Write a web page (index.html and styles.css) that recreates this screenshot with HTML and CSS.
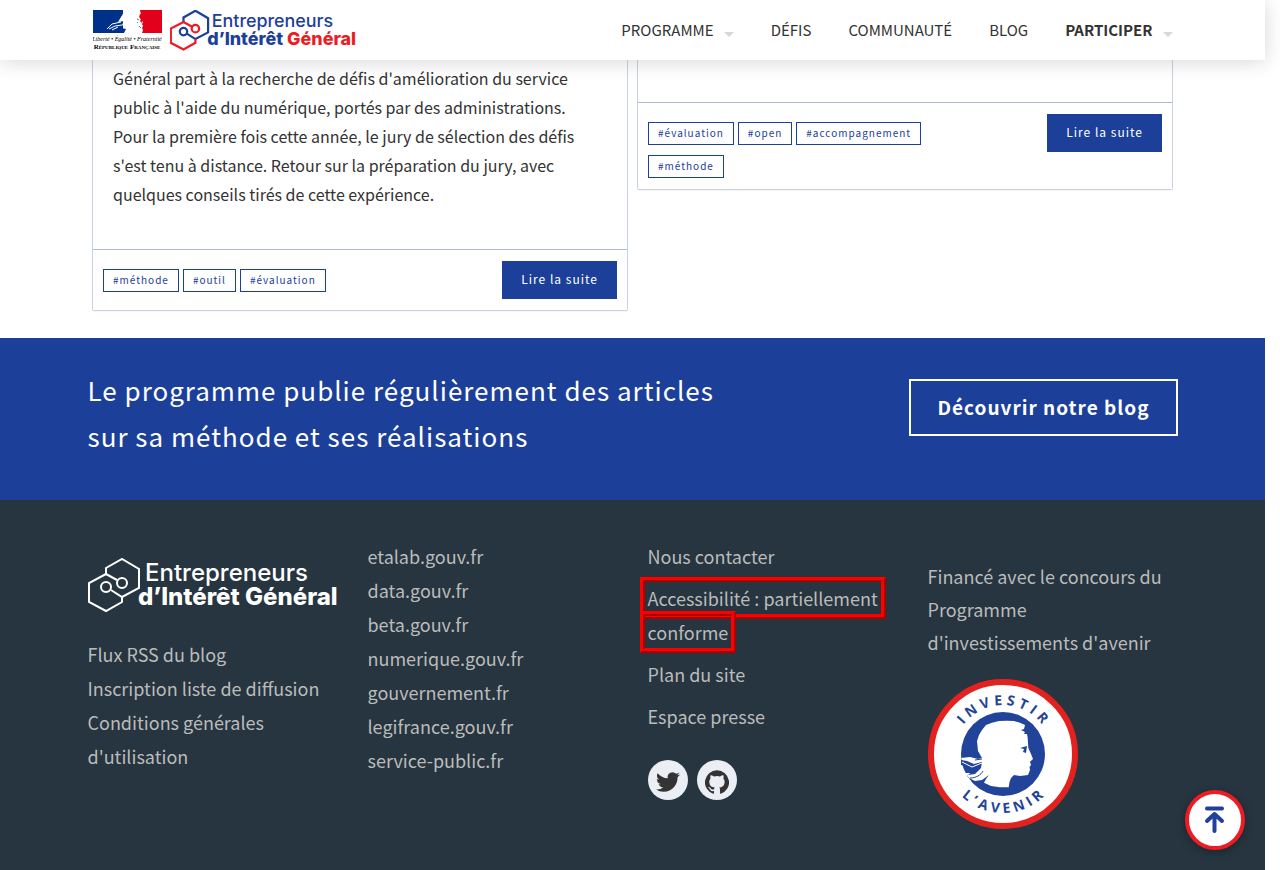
FILE: index.html
```html
<!DOCTYPE html>
<html lang="fr">
<head>
<meta charset="utf-8">
<title>Entrepreneurs d'Intérêt Général</title>
<meta name="viewport" content="width=device-width, initial-scale=1">
<link rel="stylesheet" href="styles.css">
</head>
<body>
<header class="header">
  <div class="container header-inner">
    <a class="brand" href="#" aria-label="Accueil">
      <svg class="marianne" width="70" height="41" viewBox="0 0 70 41">
        <rect width="32" height="23" fill="#003189"/>
        <rect x="30" width="18" height="23" fill="#fff"/>
        <rect x="47" width="22" height="23" fill="#e2001a"/>
        <path fill="#fff" d="M32 0C30 2 30 5 28 7L25 12L31 11L29 15L32 17L27 23H49L50 20L49 18L50 16L49 14L50 12L47 8L48 5L47 0Z"/>
        <path fill="none" stroke="#fff" stroke-width="1" d="M14 19L19 14L28 12M16 19L22 16L29 15M19 20L25 17"/>
        <path fill="#003189" d="M28 18L33 19L31 23H26Z"/>
        <path fill="none" stroke="#777" stroke-width="1" d="M44 9L46 10M44 12L45 13M46 16L48 18"/>
        <path fill="#e2001a" d="M46 7L48 9L47 11L49 13L50 5L47 4Z"/>
        <text class="motto" x="34" y="31" text-anchor="middle">Liberté • Égalité • Fraternité</text>
        <text class="republic" x="34" y="39" text-anchor="middle">République Française</text>
      </svg>
      <svg class="eig" width="188" height="41" viewBox="0 0 252 55">
        <g fill="none" stroke-width="3">
          <path class="hex-b" d="M18 16V10L34 1L51 11V30L34 39L23 32"/>
          <path class="hex-a" d="M29 22L18 16L1 25V44L18 53L34 44V39"/>
          <circle class="hex-a" cx="34" cy="25" r="5"/>
          <circle class="hex-b" cx="18" cy="29" r="5"/>
        </g>
        <text class="eig-top" x="56" y="23">Entrepreneurs</text>
        <text class="eig-bottom" x="50" y="47">d’Intérêt</text>
        <text class="eig-bottom eig-accent" x="157" y="47">Général</text>
      </svg>
    </a>
    <nav class="nav">
      <a class="has-menu" href="#">PROGRAMME</a>
      <a href="#">DÉFIS</a>
      <a href="#">COMMUNAUTÉ</a>
      <a href="#">BLOG</a>
      <a class="has-menu strong" href="#">PARTICIPER</a>
    </nav>
  </div>
</header>
<main>
  <section class="container cards">
    <article class="card">
      <p class="card-text">Général part à la recherche de défis d'amélioration du service public à l'aide du numérique, portés par des administrations. Pour la première fois cette année, le jury de sélection des défis s'est tenu à distance. Retour sur la préparation du jury, avec quelques conseils tirés de cette expérience.</p>
      <div class="card-foot">
        <div class="tags"><a href="#">#méthode</a><a href="#">#outil</a><a href="#">#évaluation</a></div>
        <a class="more" href="#">Lire la suite</a>
      </div>
    </article>
    <article class="card">
      <p class="card-text empty"></p>
      <div class="card-foot">
        <div class="tags"><a href="#">#évaluation</a><a href="#">#open</a><a href="#">#accompagnement</a><a href="#">#méthode</a></div>
        <a class="more" href="#">Lire la suite</a>
      </div>
    </article>
  </section>
  <section class="cta">
    <div class="container cta-inner">
      <p class="cta-text">Le programme publie régulièrement des articles sur sa méthode et ses réalisations</p>
      <a class="cta-button" href="#">Découvrir notre blog</a>
    </div>
  </section>
</main>
<footer class="footer">
  <div class="container footer-cols">
    <div class="col">
      <svg class="eig eig-white" width="252" height="55" viewBox="0 0 252 55" role="img" aria-label="Entrepreneurs d'Intérêt Général">
        <g fill="none" stroke-width="2">
          <path class="hex-b" d="M18 16V10L34 1L51 11V30L34 39L23 32"/>
          <path class="hex-a" d="M29 22L18 16L1 25V44L18 53L34 44V39"/>
          <circle class="hex-a" cx="34" cy="25" r="5"/>
          <circle class="hex-b" cx="18" cy="29" r="5"/>
        </g>
        <text class="eig-top" x="57" y="23">Entrepreneurs</text>
        <text class="eig-bottom" x="50" y="47">d’Intérêt</text>
        <text class="eig-bottom eig-accent" x="157" y="47">Général</text>
      </svg>
      <ul class="links">
        <li><a href="#">Flux RSS du blog</a></li>
        <li><a href="#">Inscription liste de diffusion</a></li>
        <li><a href="#">Conditions générales d'utilisation</a></li>
      </ul>
    </div>
    <div class="col">
      <ul class="links">
        <li><a href="#">etalab.gouv.fr</a></li>
        <li><a href="#">data.gouv.fr</a></li>
        <li><a href="#">beta.gouv.fr</a></li>
        <li><a href="#">numerique.gouv.fr</a></li>
        <li><a href="#">gouvernement.fr</a></li>
        <li><a href="#">legifrance.gouv.fr</a></li>
        <li><a href="#">service-public.fr</a></li>
      </ul>
    </div>
    <div class="col">
      <ul class="links spaced">
        <li><a href="#">Nous contacter</a></li>
        <li><a href="#"><span class="flagged">Accessibilité : partiellement</span> <span class="flagged">conforme</span></a></li>
        <li><a href="#">Plan du site</a></li>
        <li><a href="#">Espace presse</a></li>
      </ul>
      <div class="social">
        <a href="#" aria-label="Twitter"><svg width="24" height="24" viewBox="0 0 24 24"><path d="M23.95 4.57a10 10 0 0 1-2.82.77 4.96 4.96 0 0 0 2.16-2.72c-.95.55-2 .95-3.13 1.18a4.92 4.92 0 0 0-8.38 4.48C7.69 8.1 4.07 6.13 1.64 3.16a4.82 4.82 0 0 0-.67 2.48c0 1.7.87 3.21 2.19 4.1a4.9 4.9 0 0 1-2.23-.62v.06a4.92 4.92 0 0 0 3.95 4.83 5 5 0 0 1-2.21.08 4.94 4.94 0 0 0 4.6 3.42A9.87 9.87 0 0 1 0 19.54a13.99 13.99 0 0 0 7.56 2.21c9.05 0 14-7.5 14-13.98 0-.21 0-.42-.02-.63a9.94 9.94 0 0 0 2.46-2.55z"/></svg></a>
        <a href="#" aria-label="GitHub"><svg width="24" height="24" viewBox="0 0 24 24"><path d="M12 .3a12 12 0 0 0-3.8 23.4c.6.1.8-.3.8-.6v-2c-3.3.7-4-1.6-4-1.6-.6-1.4-1.4-1.8-1.4-1.8-1-.7.1-.7.1-.7 1.2 0 1.9 1.2 1.9 1.2 1 1.8 2.8 1.3 3.5 1 0-.8.4-1.3.7-1.6-2.7-.3-5.5-1.3-5.5-6 0-1.2.5-2.3 1.3-3.1-.2-.4-.6-1.6 0-3.2 0 0 1-.3 3.4 1.2a11.5 11.5 0 0 1 6 0c2.3-1.5 3.3-1.2 3.3-1.2.6 1.6.2 2.8 0 3.2.9.8 1.3 1.9 1.3 3.2 0 4.6-2.8 5.6-5.5 5.9.5.4.9 1 .9 2.2v3.3c0 .3.1.7.8.6A12 12 0 0 0 12 .3"/></svg></a>
      </div>
    </div>
    <div class="col">
      <p class="funding">Financé avec le concours du Programme d'investissements d'avenir</p>
      <svg class="stamp" width="150" height="150" viewBox="0 0 150 150" role="img" aria-label="Investir l'avenir">
        <circle cx="75" cy="75" r="72" fill="#fff" stroke="#e3221f" stroke-width="6"/>
        <circle cx="75" cy="75" r="42" fill="#21449a"/>
        <path fill="#fff" d="M49 62L51 56L54 51L58 46L64 43.700L71 42L79 41.700L86 42L92 43.700L97 46L96 50L93 51L97 53L96 55L99 55L99.700 59L100.300 69L103 75L105 80L102 82.700L103 86L101.500 88L102 91L100 96L92 97L86 96L83 99L81.500 103L80.700 108.300L72 108.300L63 107L56 103.700L58 100L61 96L54 101L47 102L41 99L39 96L35 96L34 94L44 94L50 90L44 88L37 86L33 79L42 78L50 80L54 79L50 72Z"/>
        <path fill="#21449a" d="M92 69L99 67L98 74L95 73L96 70ZM33 81L39 82L46 85L54 83L53 89L47 95L40 96L46 91L38 87L33 86Z"/>
        <path fill="none" stroke="#fff" stroke-width="1" d="M34 83L44 88L54 84"/>
        <path fill="none" stroke="#21449a" stroke-width="1" d="M42 99C48 99 53 96 55 92M47 81L54 80"/>
        <path id="arc-top" d="M26 75A49 49 0 0 1 124 75" fill="none"/>
        <path id="arc-bottom" d="M16 75A59 59 0 0 0 134 75" fill="none"/>
        <text class="stamp-text"><textPath href="#arc-top" startOffset="51%" text-anchor="middle">INVESTIR</textPath></text>
        <text class="stamp-text"><textPath href="#arc-bottom" startOffset="51%" text-anchor="middle">L’AVENIR</textPath></text>
      </svg>
    </div>
  </div>
</footer>
<a class="to-top" href="#" aria-label="Haut de page"><svg width="52" height="52" viewBox="0 0 52 52"><path d="M18 14.500H33M25.500 37V20M18 27L25.500 20L33 27" fill="none" stroke="#1f409b" stroke-width="4" stroke-linecap="round" stroke-linejoin="round"/></svg></a>
</body>
</html>
```
FILE: styles.css
```css
* { box-sizing: border-box; }
body {
  margin: 0;
  padding-right: 15px;
  background: #fff;
  color: #333;
  font-family: "Noto Sans CJK JP", "Noto Sans", sans-serif;
  font-size: 16px;
}
a { color: inherit; text-decoration: none; }
p, ul { margin: 0; padding: 0; }
ul { list-style: none; }
svg { display: block; }
.container { max-width: 1120px; margin: 0 auto; padding: 0 15px; }

.header {
  position: sticky;
  top: 0;
  z-index: 2;
  background: #fff;
  box-shadow: 0 2px 20px rgba(10, 10, 10, 0.16);
}
.header-inner {
  display: flex;
  justify-content: space-between;
  align-items: center;
  height: 60px;
  padding: 0 20px;
}
.brand { display: flex; align-items: center; gap: 7px; }
.motto { font: italic 6px "Liberation Serif", serif; }
.republic { font: bold 7px "Liberation Serif", serif; font-variant: small-caps; }
.hex-a { stroke: #ed1c24; }
.hex-b { stroke: #1c4099; }
.eig-top { font: 500 24px Inter, sans-serif; fill: #1c4099; }
.eig-bottom { font: 800 24px Inter, sans-serif; fill: #1c4099; }
.eig-accent { fill: #ed1c24; }
.eig-white .hex-a, .eig-white .hex-b { stroke: #fff; }
.eig-white .eig-top, .eig-white .eig-bottom, .eig-white .eig-accent { fill: #fff; }

.nav { display: flex; gap: 37px; font-size: 15px; line-height: 22px; }
.nav .strong { font-weight: 700; }
.has-menu { display: flex; align-items: center; gap: 10px; }
.has-menu::after {
  content: "";
  margin-top: 8px;
  border: 5px solid transparent;
  border-top-color: #d8d8d8;
  border-bottom: 0;
}

.cards {
  display: grid;
  grid-template-columns: 1fr 1fr;
  gap: 9px;
  align-items: start;
  max-width: 1121px;
  padding: 0 20px 27px;
}
.card {
  border: 1px solid #c9d3df;
  border-top: 0;
  border-radius: 0 0 2px 2px;
  box-shadow: 0 1px 1px rgba(0, 0, 0, 0.04);
}
.card-text { padding: 4px 30px 40px 20px; line-height: 29px; }
.card-text.empty { padding: 42px 0 0; }
.card-foot {
  display: flex;
  justify-content: space-between;
  align-items: flex-start;
  padding: 11px 10px;
  border-top: 1px solid #adb9c9;
}
.tags { display: flex; flex-wrap: wrap; flex: 0 1 60%; gap: 10px 4px; padding-top: 8px; }
.tags a {
  padding: 0 9px 1px;
  border: 1px solid #1c4099;
  color: #1c4099;
  font-size: 10px;
  line-height: 20px;
  letter-spacing: 1px;
}
.more {
  padding: 0 19px 2px;
  background: #1c4099;
  color: #fff;
  font-size: 12px;
  line-height: 36px;
  letter-spacing: 1px;
}

.cta { background: #1c4099; color: #fff; }
.cta-inner {
  display: flex;
  justify-content: space-between;
  align-items: flex-start;
  padding-top: 29px;
  padding-bottom: 41px;
}
.cta-text { flex: 0 1 60%; font-size: 26px; line-height: 46px; letter-spacing: 1px; }
.cta-button {
  margin-top: 12px;
  padding: 0 26px 2px;
  border: 2px solid #fff;
  font-size: 19px;
  font-weight: 700;
  line-height: 51px;
  letter-spacing: 1px;
}

.footer { background: #26353f; color: #bbb; font-size: 18px; line-height: 34px; }
.footer-cols {
  display: grid;
  grid-template-columns: repeat(4, minmax(0, 1fr));
  gap: 30px;
  padding-top: 39px;
  padding-bottom: 41px;
}
.col .eig { margin: 19px 0 24px; }
.spaced { display: grid; gap: 8px; }
.flagged { outline: 5px ridge red; outline-offset: 3px; }
.social { display: flex; gap: 9px; margin-top: 27px; }
.social a {
  display: grid;
  place-items: center;
  width: 40px;
  height: 40px;
  padding-top: 4px;
  border-radius: 50%;
  background: #ebeef4;
}
.social svg { fill: #333; }
.funding { padding-top: 21px; line-height: 33px; }
.stamp { margin-top: 20px; }
.stamp-text { font: bold 14px "Open Sans", sans-serif; letter-spacing: 4px; fill: #21449a; }

.to-top {
  position: fixed;
  right: 35px;
  bottom: 20px;
  z-index: 3;
  border: 4px solid #ed1c24;
  border-radius: 50%;
  background: #fff;
  box-shadow: 0 2px 10px rgba(0, 0, 0, 0.3);
}
```
